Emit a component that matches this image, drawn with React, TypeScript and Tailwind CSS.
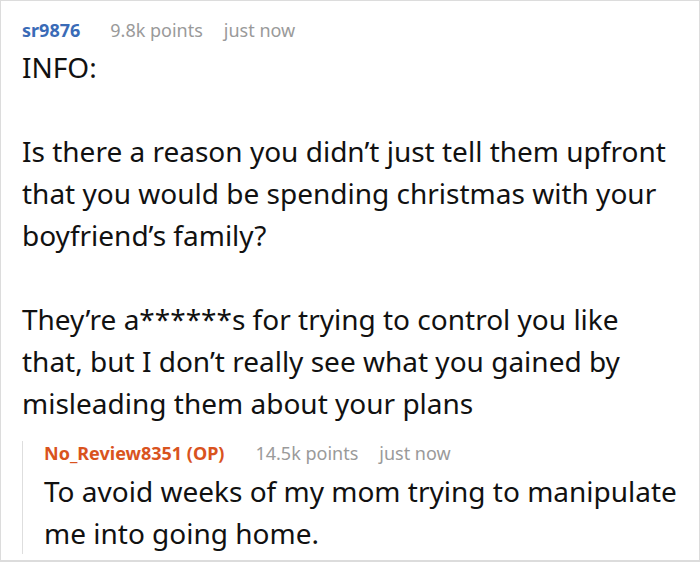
export default function App() {
  return (
    <div
      className="w-[700px] h-[562px] bg-white border border-b-2 border-[#dcdcdc] overflow-hidden text-[#111]"
      style={{ fontFamily: '"Noto Sans", "Open Sans", sans-serif' }}
    >
      <div className="pl-[21px] pt-[17px] pr-[16px]">
        {/* Comment header */}
        <div className="flex items-baseline text-[18px] leading-[24px]">
          <span className="font-bold text-[#3a6bb7]">sr9876</span>
          <span className="ml-[30px] text-[#9a9a9a]">9.8k points</span>
          <span className="ml-[21px] text-[#9a9a9a]">just now</span>
        </div>

        {/* Comment body */}
        <div className="mt-[4px] text-[28px] leading-[42px]">
          INFO:
          <br />
          <br />
          Is there a reason you didn’t just tell them upfront that you would be spending christmas with your boyfriend’s family?
          <br />
          <br />
          They’re a******s for trying to control you like that, but I don’t really see what you gained by misleading them about your plans
        </div>

        {/* Reply */}
        <div className="mt-[28px] border-l border-[#dedede] pl-[21px]">
          <div className="-mt-[11px] flex items-baseline text-[18px] leading-[24px]">
            <span className="font-bold text-[#d9531e]">No_Review8351 (OP)</span>
            <span className="ml-[31px] text-[#9a9a9a]">14.5k points</span>
            <span className="ml-[21px] text-[#9a9a9a]">just now</span>
          </div>
          <div className="mt-[5px] -mb-[11px] text-[28px] leading-[42px]">
            To avoid weeks of my mom trying to manipulate me into going home.
          </div>
        </div>
      </div>
    </div>
  );
}
